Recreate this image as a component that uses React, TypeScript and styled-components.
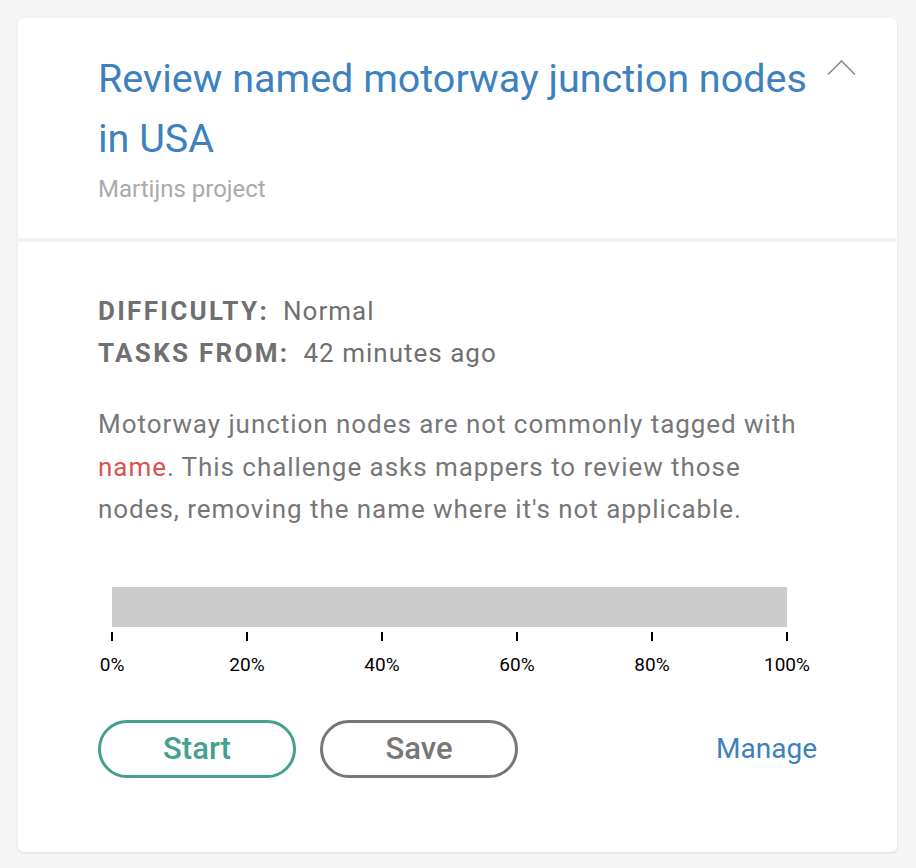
import { type FC } from "react";
import styled, { createGlobalStyle } from "styled-components";

const GlobalStyle = createGlobalStyle`
  html, body {
    margin: 0;
    padding: 0;
    background: #f5f5f5;
    font-family: Roboto, "Noto Sans", sans-serif;
  }
`;

const ticks = [0, 20, 40, 60, 80, 100];

const App: FC = () => {
  return (
    <Page>
      <GlobalStyle />
      <Card>
        <Header>
          <TitleBlock>
            <Title>Review named motorway junction nodes in USA</Title>
            <Owner>Martijns project</Owner>
          </TitleBlock>
          <Toggle aria-label="Collapse">
            <svg width="29" height="16" viewBox="0 0 29 16">
              <polyline
                points="1,14.5 14.5,1 28,14.5"
                fill="none"
                stroke="#8c8c8c"
                strokeWidth="1.6"
              />
            </svg>
          </Toggle>
        </Header>
        <Body>
          <Stats>
            <StatRow>
              <StatLabel>Difficulty:</StatLabel>
              <StatValue>Normal</StatValue>
            </StatRow>
            <StatRow>
              <StatLabel>Tasks from:</StatLabel>
              <StatValue>42 minutes ago</StatValue>
            </StatRow>
          </Stats>
          <Description>
            Motorway junction nodes are not commonly tagged with{" "}
            <Tag>name</Tag>. This challenge asks mappers to review those
            nodes, removing the name where it's not applicable.
          </Description>
          <Progress>
            <Bar />
            <Axis>
              {ticks.map((t) => (
                <Tick key={t}>
                  <TickMark />
                  <TickLabel>{t}%</TickLabel>
                </Tick>
              ))}
            </Axis>
          </Progress>
          <Actions>
            <PillButton $color="#45a08e">Start</PillButton>
            <PillButton $color="#777777">Save</PillButton>
            <ManageLink href="#">Manage</ManageLink>
          </Actions>
        </Body>
      </Card>
    </Page>
  );
};

export default App;

const Page = styled.div`
  padding: 18px 19px 16px 18px;
`;

const Card = styled.div`
  background: #fff;
  border-radius: 6px;
  box-shadow: 0 1px 3px rgba(0, 0, 0, 0.1);
  min-height: 834px;
  box-sizing: border-box;
`;

const Header = styled.div`
  display: flex;
  align-items: flex-start;
  padding: 31px 41px 35px 80px;
  border-bottom: 4px solid #f4f4f4;
`;

const TitleBlock = styled.div`
  flex: 1;
`;

const Title = styled.h1`
  margin: 0;
  font-size: 39.5px;
  font-weight: 400;
  line-height: 60px;
  color: #3d81bf;
`;

const Owner = styled.div`
  margin-top: 6px;
  font-size: 24px;
  color: #aaaaaa;
`;

const Toggle = styled.button`
  border: 0;
  background: none;
  padding: 0;
  margin: 11px 0 0 4px;
  cursor: pointer;
  display: flex;
`;

const Body = styled.div`
  padding: 48px 80px 0 80px;
`;

const Stats = styled.div`
  display: flex;
  flex-direction: column;
`;

const StatRow = styled.div`
  display: flex;
  gap: 14px;
  font-size: 26px;
  color: #707070;
  line-height: 42px;
`;

const StatLabel = styled.span`
  font-weight: 700;
  text-transform: uppercase;
  letter-spacing: 2.3px;
`;

const StatValue = styled.span`
  letter-spacing: 1px;
`;

const Description = styled.p`
  margin: 29px 0 0 0;
  max-width: 704px;
  font-size: 26px;
  line-height: 42.5px;
  letter-spacing: 0.95px;
  color: #777777;
`;

const Tag = styled.span`
  color: #d9534f;
`;

const Progress = styled.div`
  margin: 56px 30px 0 14px;
`;

const Bar = styled.div`
  height: 40px;
  background: #cccccc;
`;

const Axis = styled.div`
  display: flex;
  justify-content: space-between;
`;

const Tick = styled.div`
  width: 0;
  display: flex;
  flex-direction: column;
  align-items: center;
`;

const TickMark = styled.div`
  width: 2px;
  height: 9px;
  margin-top: 5px;
  background: #000;
  flex-shrink: 0;
`;

const TickLabel = styled.span`
  margin-top: 12px;
  font-family: Roboto, sans-serif;
  font-size: 19px;
  color: #000;
  white-space: nowrap;
`;

const Actions = styled.div`
  display: flex;
  align-items: center;
  gap: 24px;
  margin-top: 44px;
`;

const PillButton = styled.button<{ $color: string }>`
  width: 198px;
  height: 58px;
  border: 3px solid ${(p) => p.$color};
  border-radius: 29px;
  background: #fff;
  color: ${(p) => p.$color};
  font-family: Roboto, sans-serif;
  font-size: 31px;
  font-weight: 500;
  cursor: pointer;
`;

const ManageLink = styled.a`
  margin-left: auto;
  font-size: 28px;
  color: #3d81bf;
  text-decoration: none;
`;
